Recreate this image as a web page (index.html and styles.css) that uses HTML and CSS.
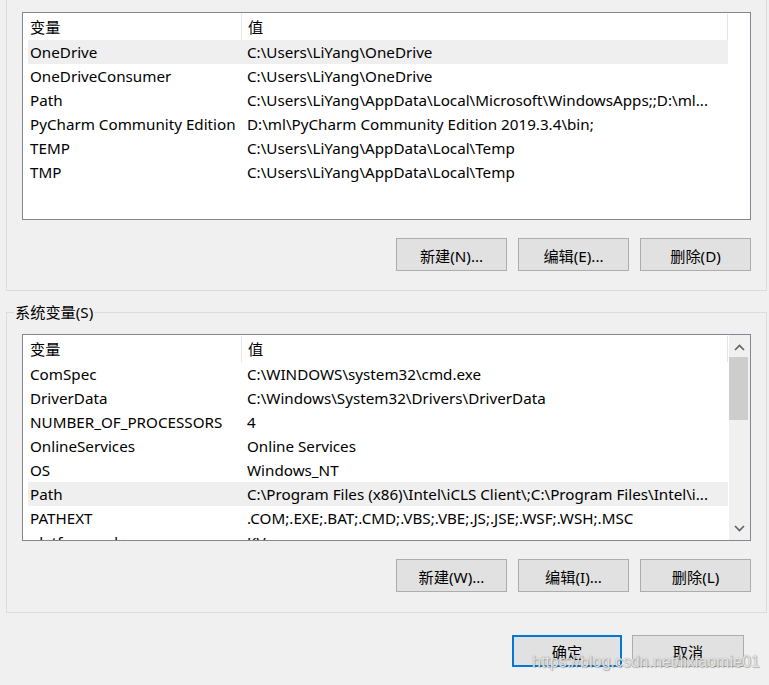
FILE: index.html
```html
<!DOCTYPE html>
<html lang="zh-CN">
<head>
    <meta charset="utf-8">
    <link rel="stylesheet" href="styles.css">
    <title>环境变量</title>
</head>
<body>
    <div class="group group-user">
        <div class="list">
            <div class="list-body">
                <div class="row head">
                    <div class="cell name">变量</div>
                    <div class="cell value">值</div>
                </div>
                <div class="row sel">
                    <div class="cell name">OneDrive</div>
                    <div class="cell value">C:\Users\LiYang\OneDrive</div>
                </div>
                <div class="row">
                    <div class="cell name">OneDriveConsumer</div>
                    <div class="cell value">C:\Users\LiYang\OneDrive</div>
                </div>
                <div class="row">
                    <div class="cell name">Path</div>
                    <div class="cell value">C:\Users\LiYang\AppData\Local\Microsoft\WindowsApps;;D:\ml...</div>
                </div>
                <div class="row">
                    <div class="cell name">PyCharm Community Edition</div>
                    <div class="cell value">D:\ml\PyCharm Community Edition 2019.3.4\bin;</div>
                </div>
                <div class="row">
                    <div class="cell name">TEMP</div>
                    <div class="cell value">C:\Users\LiYang\AppData\Local\Temp</div>
                </div>
                <div class="row">
                    <div class="cell name">TMP</div>
                    <div class="cell value">C:\Users\LiYang\AppData\Local\Temp</div>
                </div>
            </div>
        </div>
        <div class="buttons">
            <button class="btn" type="button">新建(N)...</button>
            <button class="btn" type="button">编辑(E)...</button>
            <button class="btn" type="button">删除(D)</button>
        </div>
    </div>

    <fieldset class="group group-system">
        <legend>系统变量(S)</legend>
        <div class="list">
            <div class="list-body">
                <div class="row head">
                    <div class="cell name">变量</div>
                    <div class="cell value">值</div>
                </div>
                <div class="row">
                    <div class="cell name">ComSpec</div>
                    <div class="cell value">C:\WINDOWS\system32\cmd.exe</div>
                </div>
                <div class="row">
                    <div class="cell name">DriverData</div>
                    <div class="cell value">C:\Windows\System32\Drivers\DriverData</div>
                </div>
                <div class="row">
                    <div class="cell name">NUMBER_OF_PROCESSORS</div>
                    <div class="cell value">4</div>
                </div>
                <div class="row">
                    <div class="cell name">OnlineServices</div>
                    <div class="cell value">Online Services</div>
                </div>
                <div class="row">
                    <div class="cell name">OS</div>
                    <div class="cell value">Windows_NT</div>
                </div>
                <div class="row sel">
                    <div class="cell name">Path</div>
                    <div class="cell value">C:\Program Files (x86)\Intel\iCLS Client\;C:\Program Files\Intel\i...</div>
                </div>
                <div class="row">
                    <div class="cell name">PATHEXT</div>
                    <div class="cell value">.COM;.EXE;.BAT;.CMD;.VBS;.VBE;.JS;.JSE;.WSF;.WSH;.MSC</div>
                </div>
                <div class="row">
                    <div class="cell name">platformcode</div>
                    <div class="cell value">KV</div>
                </div>
            </div>
            <div class="scrollbar">
                <svg class="arrow" width="21" height="22" viewBox="0 0 21 22">
                    <path d="M6 15 L10.5 10.5 L15 15" fill="none" stroke="#606060" stroke-width="1.6"/>
                </svg>
                <div class="thumb"></div>
                <div class="track"></div>
                <svg class="arrow" width="21" height="20" viewBox="0 0 21 20">
                    <path d="M6 6 L10.5 10.5 L15 6" fill="none" stroke="#606060" stroke-width="1.6"/>
                </svg>
            </div>
        </div>
        <div class="buttons">
            <button class="btn" type="button">新建(W)...</button>
            <button class="btn" type="button">编辑(I)...</button>
            <button class="btn" type="button">删除(L)</button>
        </div>
    </fieldset>

    <div class="footer">
        <button class="btn btn-default" type="button">确定</button>
        <button class="btn" type="button">取消</button>
    </div>

    <div class="watermark">https://blog.csdn.net/lixiaomie01</div>
</body>
</html>
```

FILE: styles.css
```css
html, body {
    margin: 0;
    padding: 0;
}
body {
    position: relative;
    width: 769px;
    height: 685px;
    overflow: hidden;
    background-color: #f0f0f0;
    color: #000;
    font-family: "Noto Sans", "Noto Sans CJK SC", sans-serif;
    font-size: 15.2px;
}
.group {
    box-sizing: border-box;
    width: 761px;
    margin: 0 0 0 6px;
    border: 1px solid #dcdcdc;
    padding: 0 15px 0 15px;
}
.group-user {
    height: 291px;
    border-top: none;
    padding-top: 12px;
}
.group-system {
    min-width: 0;
    height: 311px;
    margin-top: 11px;
    padding-top: 0;
}
.group-system legend {
    margin-left: -8px;
    padding: 0 1px;
    line-height: 20px;
}
.group-system .list {
    margin-top: 12px;
    height: 207px;
}

/* list view */
.list {
    box-sizing: border-box;
    display: flex;
    width: 729px;
    height: 208px;
    border: 1px solid #828790;
    background: #fff;
    overflow: hidden;
}
.list-body {
    width: 700px;
    padding-left: 5px;
}
.row {
    display: flex;
    height: 24px;
    line-height: 24px;
    white-space: nowrap;
}
.row.head {
    height: 27px;
    line-height: 27px;
}
.row.sel {
    background: #efefef;
}
.cell {
    overflow: hidden;
}
.name {
    width: 211px;
    padding-left: 2px;
    flex: none;
}
.value {
    flex: 1;
    padding-left: 6px;
}
.head .cell {
    border-right: 1px solid #e5e5e5;
    height: 26px;
    margin-top: 1px;
    line-height: 26px;
}

/* scrollbar */
.scrollbar {
    display: flex;
    flex-direction: column;
    width: 21px;
    margin-left: auto;
    background: #f0f0f0;
}
.arrow {
    display: block;
    flex: none;
}
.thumb {
    height: 63px;
    width: 19px;
    background: #cdcdcd;
}
.track {
    flex: 1;
}

/* buttons */
.buttons {
    display: flex;
    justify-content: flex-end;
    gap: 11px;
    width: 729px;
    padding-top: 18px;
}
.btn {
    box-sizing: border-box;
    width: 111px;
    height: 33px;
    margin: 0;
    padding: 0;
    border: 1px solid #adadad;
    border-radius: 0;
    background: #e1e1e1;
    color: #000;
    font-family: "Noto Sans", "Noto Sans CJK SC", sans-serif;
    font-size: 15.2px;
}
.btn-default {
    width: 110px;
    border: 2px solid #0078d7;
}
.footer {
    display: flex;
    gap: 10px;
    padding: 22px 0 0 512px;
}
.footer .btn {
    height: 32px;
}
.footer .btn + .btn {
    width: 112px;
}

.watermark {
    position: absolute;
    left: 532px;
    top: 653px;
    font-family: "Liberation Sans", Arial, sans-serif;
    font-size: 16px;
    color: rgba(255, 255, 255, 0.75);
    text-shadow: 0 0 1px #8a8a8a, 1px 1px 1px rgba(0, 0, 0, 0.25);
    white-space: nowrap;
}
```
